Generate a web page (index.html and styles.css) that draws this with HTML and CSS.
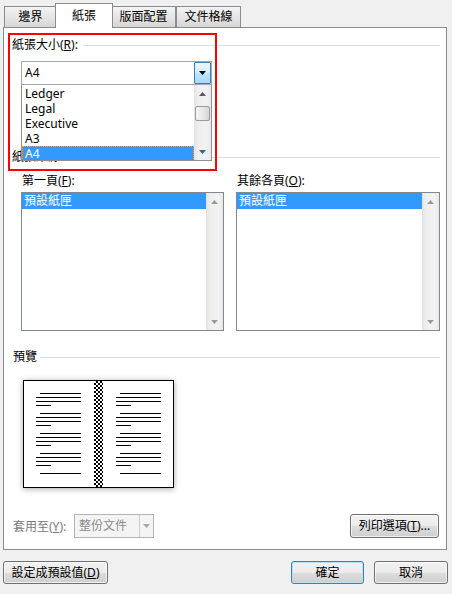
FILE: index.html
```html
<!DOCTYPE html>
<html lang="zh-Hant">
<head>
<meta charset="utf-8">
<title>版面設定</title>
<link rel="stylesheet" href="styles.css">
</head>
<body>
<div class="dialog">
  <div class="tabs">
    <div class="tab t1">邊界</div>
    <div class="tab active">紙張</div>
    <div class="tab t3">版面配置</div>
    <div class="tab t4">文件格線</div>
  </div>

  <div class="panel">
    <div class="group-head"><span class="gh-label">紙張大小(<u>R</u>):</span><span class="rule"></span></div>

    <div class="combo size-combo">
      <span class="combo-text">A4</span>
      <span class="combo-btn"><svg class="arr" width="7" height="4" viewBox="0 0 7 4"><path d="M0 0H7L3.5 4Z" fill="#000"/></svg></span>
      <div class="droplist">
        <div class="items">
          <div class="item">Ledger</div>
          <div class="item">Legal</div>
          <div class="item">Executive</div>
          <div class="item">A3</div>
          <div class="item sel">A4</div>
        </div>
        <div class="vscroll">
          <span class="sb-btn"><svg width="7" height="4" viewBox="0 0 7 4"><path d="M3.5 0L7 4H0Z" fill="#5a5a5a"/></svg></span>
          <span class="sb-track"><span class="thumb"></span></span>
          <span class="sb-btn"><svg width="7" height="4" viewBox="0 0 7 4"><path d="M0 0H7L3.5 4Z" fill="#5a5a5a"/></svg></span>
        </div>
      </div>
    </div>

    <div class="group-head source"><span class="gh-label">紙張來源</span><span class="rule"></span></div>

    <div class="trays">
      <div class="tray">
        <div class="tray-label">第一頁(<u>F</u>):</div>
        <div class="listbox">
          <div class="lb-items"><div class="lb-item sel">預設紙匣</div></div>
          <div class="vscroll light">
            <span class="sb-btn"><svg width="7" height="4" viewBox="0 0 7 4"><path d="M3.5 0L7 4H0Z" fill="#9a9a9a"/></svg></span>
            <span class="sb-track"></span>
            <span class="sb-btn"><svg width="7" height="4" viewBox="0 0 7 4"><path d="M0 0H7L3.5 4Z" fill="#9a9a9a"/></svg></span>
          </div>
        </div>
      </div>
      <div class="tray">
        <div class="tray-label">其餘各頁(<u>O</u>):</div>
        <div class="listbox">
          <div class="lb-items"><div class="lb-item sel">預設紙匣</div></div>
          <div class="vscroll light">
            <span class="sb-btn"><svg width="7" height="4" viewBox="0 0 7 4"><path d="M3.5 0L7 4H0Z" fill="#9a9a9a"/></svg></span>
            <span class="sb-track"></span>
            <span class="sb-btn"><svg width="7" height="4" viewBox="0 0 7 4"><path d="M0 0H7L3.5 4Z" fill="#9a9a9a"/></svg></span>
          </div>
        </div>
      </div>
    </div>

    <div class="group-head preview-head"><span class="gh-label">預覽</span><span class="rule"></span></div>

    <div class="preview">
      <svg width="149" height="106" viewBox="0 0 149 106" shape-rendering="crispEdges">
        <defs>
          <pattern id="ck" width="4" height="4" patternUnits="userSpaceOnUse">
            <rect width="4" height="4" fill="#fff"/>
            <rect width="2" height="2" fill="#000"/>
            <rect x="2" y="2" width="2" height="2" fill="#000"/>
          </pattern>
          <g id="para">
            <rect x="4" y="0" width="41" height="1"/>
            <rect x="0" y="4" width="45" height="1"/>
            <rect x="0" y="8" width="45" height="1"/>
            <rect x="0" y="12" width="15" height="1"/>
          </g>
        </defs>
        <rect x="70" y="0" width="9" height="106" fill="url(#ck)"/>
        <g fill="#000">
          <use href="#para" x="12" y="12"/>
          <use href="#para" x="12" y="32"/>
          <use href="#para" x="12" y="52"/>
          <use href="#para" x="12" y="72"/>
          <rect x="16" y="92" width="41" height="1"/>
          <use href="#para" x="92" y="12"/>
          <use href="#para" x="92" y="32"/>
          <use href="#para" x="92" y="52"/>
          <use href="#para" x="92" y="72"/>
          <rect x="96" y="92" width="41" height="1"/>
        </g>
      </svg>
    </div>

    <div class="apply-row">
      <span class="apply-label">套用至(<u>Y</u>):</span>
      <div class="combo disabled-combo">
        <span class="combo-text">整份文件</span>
        <span class="combo-btn"><svg width="7" height="4" viewBox="0 0 7 4"><path d="M0 0H7L3.5 4Z" fill="#a8a8a8"/></svg></span>
      </div>
      <button class="btn print-opt">列印選項(<u>T</u>)...</button>
    </div>
  </div>

  <div class="footer">
    <button class="btn set-default">設定成預設值(<u>D</u>)</button>
    <button class="btn ok default">確定</button>
    <button class="btn cancel">取消</button>
  </div>

  <div class="highlight"></div>
</div>
</body>
</html>
```

FILE: styles.css
```css
* { box-sizing: border-box; }
html, body { margin: 0; padding: 0; }
body {
  width: 452px;
  height: 594px;
  overflow: hidden;
  background: #f0f0f0;
  font-family: "Noto Sans", "Noto Sans CJK TC", sans-serif;
  font-size: 12px;
  color: #000;
}
u { text-decoration: underline; text-underline-offset: 1px; }
svg { display: block; }

.dialog {
  position: relative;
  height: 594px;
  padding: 3px 4px 0 3px;
}

/* ---------- tabs ---------- */
.tabs {
  position: relative;
  z-index: 2;
  display: flex;
  align-items: flex-start;
  height: 25px;
  padding-left: 1px;
}
.tab {
  height: 21px;
  margin-top: 3px;
  border: 1px solid #898c95;
  border-bottom: none;
  background: linear-gradient(#f3f3f3, #e4e4e4 55%, #d6d6d6);
  text-align: center;
  line-height: 20px;
  white-space: nowrap;
}
.t1 { width: 53px; }
.tab.active {
  position: relative;
  z-index: 3;
  width: 58px;
  height: 25px;
  margin-top: 0;
  margin-left: -2px;
  background: #fff;
  line-height: 23px;
}
.t3 { width: 65px; margin-left: -2px; }
.t4 { width: 65px; }

/* ---------- panel ---------- */
.panel {
  position: relative;
  z-index: 1;
  margin-top: -1px;
  margin-right: 1px;
  border: 1px solid #898c95;
  background: #fff;
  padding: 9px 6px 11px 8px;
}

.group-head {
  display: flex;
  align-items: flex-start;
  height: 16px;
  line-height: 16px;
}
.gh-label { white-space: nowrap; }
.group-head .rule {
  flex: 1;
  height: 1px;
  margin-top: 8px;
  margin-left: 5px;
  background: #d5dfe5;
}
.group-head.source { margin-top: 64px; }
.group-head.preview-head { margin-top: 18px; padding-left: 1px; }
.group-head.preview-head .rule { margin-left: 3px; }

/* ---------- combo boxes ---------- */
.combo {
  position: relative;
  display: flex;
  height: 24px;
  border: 1px solid #abadb3;
  background: #fff;
}
.combo-text {
  flex: 1;
  padding-left: 3px;
  line-height: 22px;
  white-space: nowrap;
}
.combo-btn {
  display: flex;
  align-items: center;
  justify-content: center;
}
.size-combo {
  width: 191px;
  margin-top: 8px;
  margin-left: 9px;
  border-color: #a4a9b0;
}
.size-combo .combo-btn {
  width: 17px;
  border: 1px solid #3c7fb1;
  border-radius: 1px;
  background: linear-gradient(#eaf6fd, #d9f0fc 45%, #bee6fd 50%, #a7d9f5);
}

.droplist {
  position: absolute;
  left: -1px;
  top: 23px;
  width: 191px;
  height: 76px;
  display: flex;
  border: 1px solid #8e8f8f;
  border-top: none;
  padding-top: 1px;
  background: #fff;
}
.items {
  flex: 1;
  overflow: hidden;
}
.item {
  height: 15px;
  line-height: 15px;
  padding-left: 3px;
  white-space: nowrap;
}
.item.sel {
  background: #3399ff;
  color: #fff;
  outline: 1px dotted #e8a060;
  outline-offset: -1px;
}

/* ---------- scrollbars ---------- */
.vscroll {
  width: 17px;
  display: flex;
  flex-direction: column;
  background: linear-gradient(90deg, #e3e3e3, #efefef 25%, #f2f2f2 75%, #e8e8e8);
}
.droplist .vscroll { margin-top: -1px; }
.sb-btn {
  height: 17px;
  display: flex;
  align-items: center;
  justify-content: center;
}
.sb-track {
  flex: 1;
  position: relative;
}
.thumb {
  position: absolute;
  left: 1px;
  top: 4px;
  width: 15px;
  height: 15px;
  border: 1px solid #9a9a9a;
  border-radius: 2px;
  background: linear-gradient(90deg, #f4f4f4, #e8e8e8 50%, #d6d6d6);
}

/* ---------- paper source ---------- */
.trays {
  display: grid;
  grid-template-columns: 203px 204px;
  column-gap: 12px;
  margin-top: 8px;
  margin-left: 9px;
}
.tray-label {
  height: 16px;
  line-height: 16px;
  padding-left: 1px;
  white-space: nowrap;
}
.listbox {
  display: flex;
  height: 139px;
  margin-top: 3px;
  border: 1px solid #828790;
  background: #fff;
}
.lb-items { flex: 1; }
.lb-item {
  height: 16px;
  line-height: 16px;
  padding-left: 2px;
  white-space: nowrap;
}
.lb-item.sel { background: #3399ff; color: #fff; }

/* ---------- preview ---------- */
.preview {
  width: 151px;
  height: 108px;
  margin-top: 15px;
  margin-left: 11px;
  border: 1px solid #000;
  background: #fff;
  box-shadow: 0 1px 6px rgba(0, 0, 0, 0.35);
}

/* ---------- apply row ---------- */
.apply-row {
  display: flex;
  align-items: center;
  height: 24px;
  margin-top: 26px;
}
.apply-label {
  width: 62px;
  padding-left: 1px;
  color: #7a7a7a;
  white-space: nowrap;
}
.disabled-combo {
  width: 80px;
  border-color: #b0b4b8;
  background: #f4f4f4;
  color: #8a8a8a;
}
.disabled-combo .combo-text { padding-left: 4px; }
.disabled-combo .combo-btn {
  width: 14px;
  border-left: 1px solid #c9cdd0;
}

/* ---------- buttons ---------- */
.btn {
  height: 24px;
  padding: 0;
  border: 1px solid #707070;
  border-radius: 3px;
  background: linear-gradient(#f2f2f2, #ebebeb 50%, #dddddd 51%, #cfcfcf);
  box-shadow: inset 0 0 0 1px rgba(255, 255, 255, 0.7);
  font-family: "Noto Sans", "Noto Sans CJK TC", sans-serif;
  font-size: 12px;
  color: #000;
  line-height: 20px;
  white-space: nowrap;
}
.print-opt {
  width: 89px;
  margin-left: auto;
  margin-right: 1px;
}

.footer {
  display: flex;
  margin-top: 11px;
}
.footer .btn { height: 23px; }
.set-default { width: 105px; }
.ok { width: 73px; margin-left: auto; }
.cancel { width: 74px; margin-left: 10px; }
.btn.default {
  border-color: #3c7fb1;
  box-shadow: inset 0 0 0 1px #b9e1f7;
}

/* ---------- red annotation ---------- */
.highlight {
  position: absolute;
  left: 8px;
  top: 33px;
  width: 209px;
  height: 138px;
  border: 2px solid #ff0000;
  z-index: 5;
  pointer-events: none;
}
```
